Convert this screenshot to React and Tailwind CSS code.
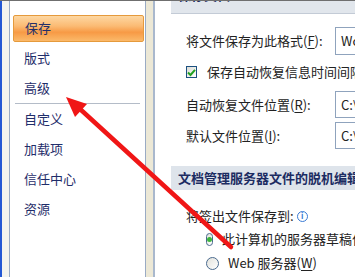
import React from "react";

const font = { fontFamily: '"Noto Sans CJK SC", "Noto Sans", sans-serif' };

function U({ children }) {
  return <span className="underline underline-offset-2">{children}</span>;
}

function NavItem({ label, selected, top }) {
  if (selected) {
    return (
      <div className="h-[30px] flex items-center pl-[3px] pr-[1px]">
        <div className="h-[27px] w-full flex items-center pl-[11px] rounded-[2px] border border-[#e59a3c] bg-[linear-gradient(to_bottom,#fdd7a2_0%,#fbbb74_40%,#f79a45_65%,#fbb96a_100%)] text-[#24306a]">
          {label}
        </div>
      </div>
    );
  }
  return (
    <div className="h-[30px] flex items-center pl-[14px] text-[#1f2d6a]">
      <span className={top ? "-translate-y-[4px]" : ""}>{label}</span>
    </div>
  );
}

function Checkbox() {
  return (
    <div className="w-[12px] h-[12px] border border-[#1c5180] bg-[linear-gradient(135deg,#dcdcd6,#ffffff)] flex items-center justify-center">
      <svg width="9" height="9" viewBox="0 0 9 9">
        <path d="M1 4.5 L3.5 7 L8 1.8" stroke="#21a121" strokeWidth="2" fill="none" />
      </svg>
    </div>
  );
}

function Radio({ checked }) {
  return (
    <div className="w-[13px] h-[13px] rounded-full border border-[#4a6a8e] bg-[linear-gradient(135deg,#e2e2dc,#ffffff)] flex items-center justify-center">
      {checked && <div className="w-[5px] h-[5px] rounded-full bg-[#3cb63c]" />}
    </div>
  );
}

function Field({ label, value }) {
  return (
    <div className="flex items-center h-full whitespace-nowrap">
      <div className="w-[149px] shrink-0 text-[#222]">{label}</div>
      <div className="w-[60px] shrink-0 h-full border border-[#8fa3bd] bg-white flex items-center pl-[5px] text-[#222] overflow-hidden">
        {value}
      </div>
    </div>
  );
}

export default function App() {
  return (
    <div
      className="relative w-[355px] h-[277px] overflow-hidden bg-white text-[13px] leading-[16px] flex border-t border-[#6f6f6f]"
      style={font}
    >
      {/* window frame */}
      <div className="w-[2px] shrink-0 bg-[#2458d4]" />
      <div className="w-[7px] shrink-0 bg-[#f4f4ef]" />

      {/* left nav */}
      <div className="w-[137px] shrink-0 bg-white border-l border-r border-[#9aabc4] overflow-hidden">
        <div className="-mt-[18px] flex flex-col">
          <NavItem label="常用" top />
          <NavItem label="保存" selected />
          <NavItem label="版式" />
          <NavItem label="高级" />
          <div className="h-px mx-[5px] bg-[#b4bcc8]" />
          <NavItem label="自定义" />
          <NavItem label="加载项" />
          <NavItem label="信任中心" />
          <NavItem label="资源" />
        </div>
      </div>

      {/* splitter */}
      <div className="w-[7px] shrink-0 bg-[#ece8d6]" />
      <div className="w-[2px] shrink-0 bg-[#a9b8cd]" />

      {/* content */}
      <div className="flex-1 min-w-0 pl-[16px] flex flex-col">
        <div className="h-[13px] shrink-0 overflow-hidden bg-[#e1e6ec] border-b border-[#c3cbd6]">
          <div className="-mt-[13px] pl-[7px] font-bold text-[#1c2c62] leading-[13px]">保存文档</div>
        </div>

        <div className="pl-[15px] flex flex-col">
          <div className="h-[28px] mt-[13px]">
            <Field label={<>将文件保存为此格式(<U>F</U>):</>} value="Word 文档" />
          </div>

          <div className="h-[20px] mt-[7px] flex items-center gap-[10px] whitespace-nowrap text-[#222]">
            <Checkbox />
            <span>保存自动恢复信息时间间隔</span>
          </div>

          <div className="h-[27px] mt-[9px]">
            <Field label={<>自动恢复文件位置(<U>R</U>):</>} value="C:\Users" />
          </div>

          <div className="h-[27px] mt-[4px]">
            <Field label={<>默认文件位置(<U>I</U>):</>} value="C:\Users" />
          </div>
        </div>

        <div className="h-[24px] mt-[17px] shrink-0 bg-[#dee4eb] flex items-center pl-[7px] font-bold text-[#1c2c62] whitespace-nowrap">
          文档管理服务器文件的脱机编辑选项
        </div>

        <div className="pl-[15px] flex flex-col whitespace-nowrap text-[#222]">
          <div className="h-[20px] mt-[16px] flex items-center gap-[3px]">
            <span>将签出文件保存到:</span>
            <div className="w-[11px] h-[11px] rounded-full border border-[#3a7bd5] flex items-center justify-center text-[8px] leading-none font-bold text-[#3a7bd5]">
              i
            </div>
          </div>
          <div className="h-[20px] mt-[3px] flex items-center pl-[20px] gap-[9px]">
            <Radio checked />
            <span>此计算机的服务器草稿位置</span>
          </div>
          <div className="h-[20px] mt-[4px] flex items-center pl-[20px] gap-[9px]">
            <Radio />
            <span>
              Web 服务器(<U>W</U>)
            </span>
          </div>
        </div>
      </div>

      {/* red annotation arrow */}
      <svg
        className="absolute inset-0 pointer-events-none"
        width="355"
        height="277"
        viewBox="0 0 355 277"
      >
        <line x1="231" y1="246" x2="80" y2="108" stroke="#f01616" strokeWidth="4.5" strokeLinecap="round" />
        <polygon points="66,96 87,103 75,116" fill="#f01616" />
      </svg>
    </div>
  );
}
